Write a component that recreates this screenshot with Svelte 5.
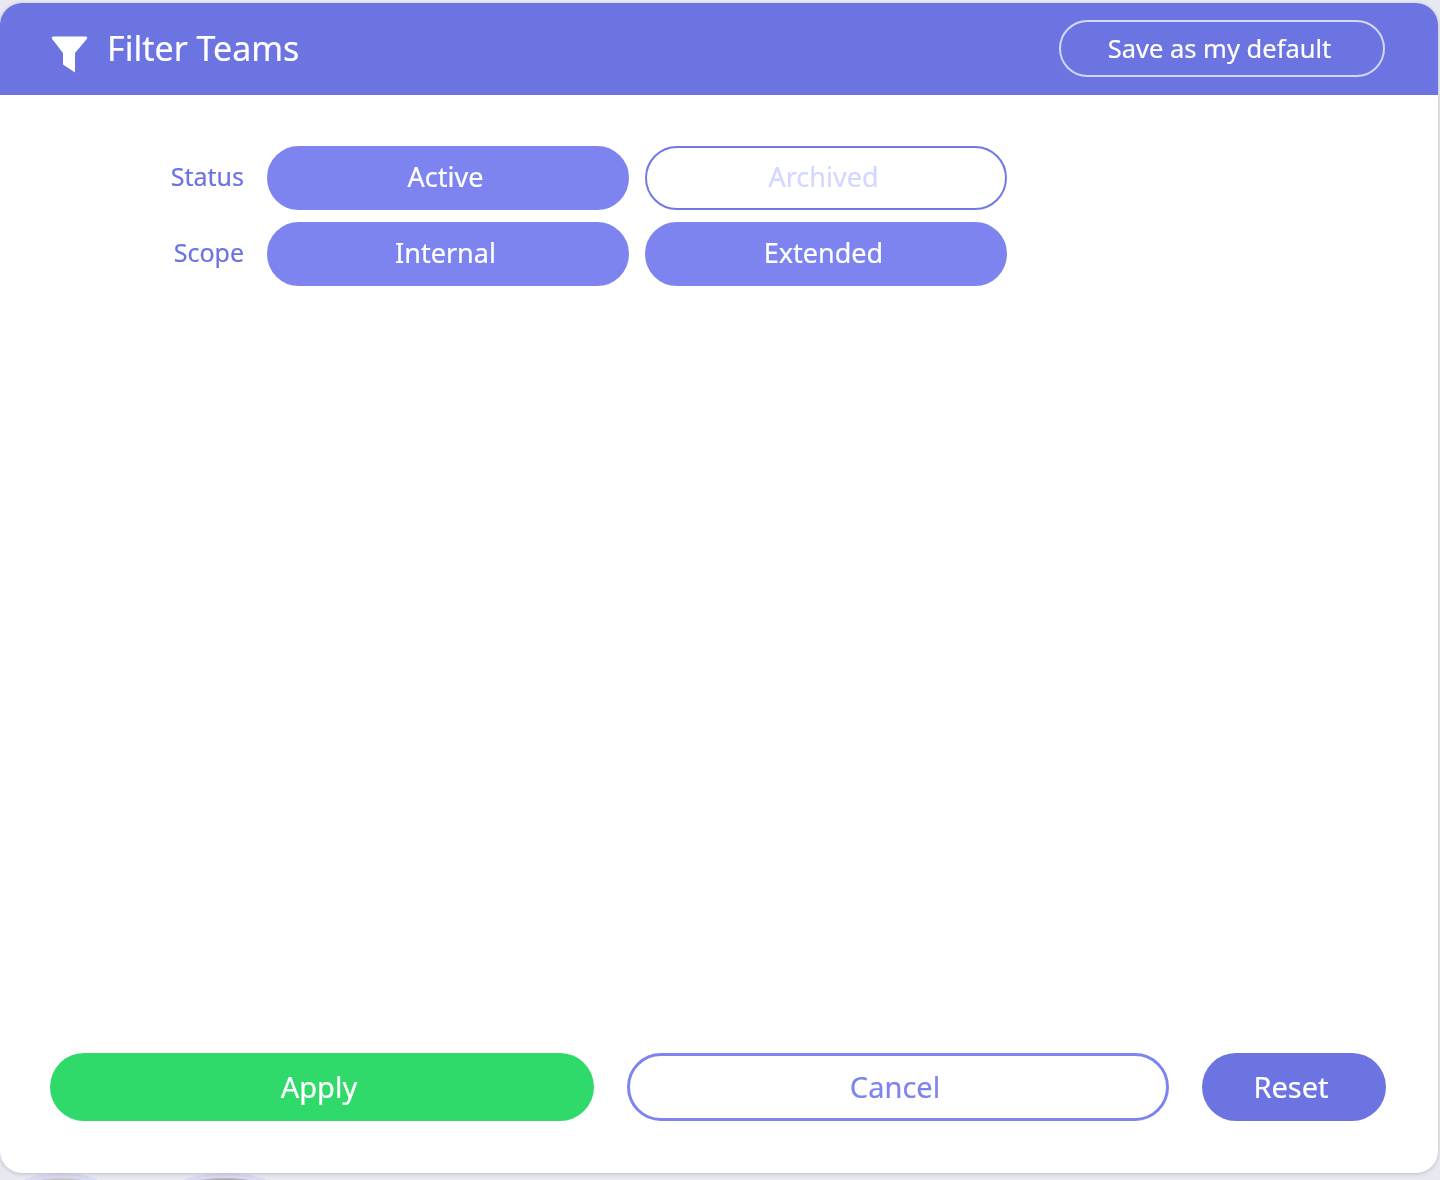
<script>
  const rows = [
    { label: 'Status', options: [{ text: 'Active', on: true }, { text: 'Archived', on: false }] },
    { label: 'Scope', options: [{ text: 'Internal', on: true }, { text: 'Extended', on: true }] }
  ];
</script>

<div class="page">
  <div class="dialog">
    <header>
      <div class="title">
        <svg width="38" height="37" viewBox="0 0 38 37" aria-hidden="true">
          <path d="M1.2 3 Q-0.2 0.5 2.4 0.5 H34.6 Q37.2 0.5 35.8 3 L24 17 V36.5 L12 28.5 V17 Z" fill="#fff" />
        </svg>
        <h1>Filter Teams</h1>
      </div>
      <button class="save">Save as my default</button>
    </header>

    <div class="filters">
      {#each rows as row}
        <div class="row">
          <span class="label">{row.label}</span>
          {#each row.options as o}
            <button class="pill" class:on={o.on}>{o.text}</button>
          {/each}
        </div>
      {/each}
    </div>

    <footer>
      <button class="action apply">Apply</button>
      <button class="action cancel">Cancel</button>
      <button class="action reset">Reset</button>
    </footer>
  </div>
  <div class="peek">
    <span class="avatar"></span>
    <span class="avatar second"></span>
  </div>
</div>

<style>
  :global(body) {
    margin: 0;
    background: #e8e8f0;
  }
  .page {
    width: 1440px;
    height: 1180px;
    padding: 3px 2px 0 0;
    box-sizing: border-box;
    overflow: hidden;
    font-family: "Noto Sans", "Open Sans", sans-serif;
    filter: blur(0.5px);
  }
  .dialog {
    height: 1170px;
    background: #fff;
    border-radius: 22px;
    display: flex;
    flex-direction: column;
    box-shadow: 0 1px 4px rgba(0, 0, 0, 0.18);
    position: relative;
    z-index: 1;
  }
  header {
    height: 92px;
    flex: none;
    background: #6b74e0;
    border-radius: 22px 22px 0 0;
    display: flex;
    align-items: center;
    justify-content: space-between;
    padding: 0 53px 0 51px;
  }
  .title {
    display: flex;
    align-items: center;
    gap: 18px;
  }
  .title svg {
    margin: 5px 0 -5px;
  }
  h1 {
    margin: -2px 0 0;
    font-size: 34px;
    font-weight: 400;
    color: #fff;
    -webkit-text-stroke: 0.2px #fff;
  }
  button {
    font-family: inherit;
    cursor: pointer;
    box-sizing: border-box;
    padding: 0;
    -webkit-text-stroke: 0.2px currentColor;
  }
  .save {
    width: 326px;
    height: 57px;
    margin-top: -1px;
    padding: 0 5px 2px 0;
    border: 2px solid #d3d6f6;
    border-radius: 29px;
    background: transparent;
    color: #fff;
    font-size: 25.5px;
  }
  .filters {
    flex: 1;
    padding: 51px 0 0 0;
    display: flex;
    flex-direction: column;
    gap: 12px;
  }
  .row {
    display: flex;
    align-items: center;
    gap: 16px;
  }
  .label {
    width: 244px;
    margin-right: 7px;
    padding-bottom: 4px;
    text-align: right;
    font-size: 25px;
    color: #6b74e0;
    -webkit-text-stroke: 0.2px currentColor;
  }
  .pill {
    width: 362px;
    height: 64px;
    border-radius: 32px;
    border: 2.5px solid #7078e6;
    background: #fff;
    color: #d3d6ff;
    font-size: 27px;
    padding: 0 5px 3px 0;
  }
  .pill.on {
    background: #7e84ef;
    border-color: #7e84ef;
    color: #fff;
  }
  footer {
    display: flex;
    padding: 0 52px 52px 50px;
    gap: 33px;
  }
  .action {
    height: 68px;
    border-radius: 34px;
    font-size: 29px;
    border: 0;
    padding: 0 6px 2px 0;
  }
  .apply {
    width: 544px;
    background: #2fda6b;
    color: #fff;
  }
  .cancel {
    width: 542px;
    background: #fff;
    border: 3px solid #7e84ef;
    color: #7e84ef;
  }
  .reset {
    width: 184px;
    background: #6b74e0;
    color: #fff;
  }
  .peek {
    display: flex;
    gap: 60px;
    padding-left: 12px;
  }
  .avatar {
    width: 98px;
    height: 40px;
    box-sizing: border-box;
    border: 5px solid #d9d9f4;
    border-radius: 50%;
    background: #c8c8c2;
    display: block;
  }
  .second {
    width: 110px;
    background: #b4b2ae;
  }
</style>
